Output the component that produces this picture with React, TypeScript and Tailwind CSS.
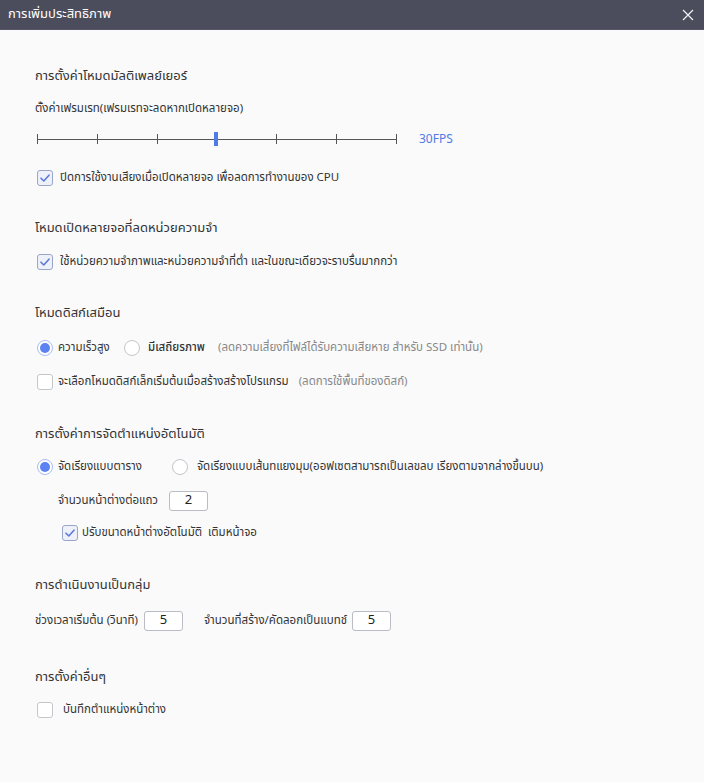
import React from 'react';

const font = { fontFamily: '"Noto Sans Thai", Tahoma, "Noto Sans", "DejaVu Sans", sans-serif' };

function Check({ checked }: { checked: boolean }) {
    return (
        <span
            className={`flex h-[16px] w-[16px] shrink-0 items-center justify-center rounded-[3px] border ${
                checked ? 'border-[#9aa6c8] bg-[#eef1fa]' : 'border-[#c4c6cc] bg-white'
            }`}
        >
            {checked ? (
                <svg width="10" height="8" viewBox="0 0 10 8" fill="none">
                    <path d="M1 4.2 3.8 7 9 1.2" stroke="#5b7bd5" strokeWidth="1.6" strokeLinecap="round" strokeLinejoin="round" />
                </svg>
            ) : null}
        </span>
    );
}

function Radio({ checked }: { checked: boolean }) {
    return (
        <span
            className={`flex h-[16px] w-[16px] shrink-0 items-center justify-center rounded-full border ${
                checked ? 'border-[#a9bdf5] bg-white' : 'border-[#c4c6cc] bg-white'
            }`}
        >
            {checked ? <span className="h-[10px] w-[10px] rounded-full bg-[#5b82f0]" /> : null}
        </span>
    );
}

function NumBox({ value }: { value: string }) {
    return (
        <span className="flex h-[20px] w-[39px] shrink-0 items-center justify-center rounded-[3px] border border-[#b9bcc4] bg-white text-[13px] text-[#222]">
            {value}
        </span>
    );
}

function Title({ children, className = '' }: { children: React.ReactNode; className?: string }) {
    return <div className={`h-[20px] text-[13px] leading-[20px] text-[#333] ${className}`}>{children}</div>;
}

function Row({ children, className = '' }: { children: React.ReactNode; className?: string }) {
    return <div className={`flex h-[20px] items-center whitespace-nowrap text-[11.5px] text-[#333] ${className}`}>{children}</div>;
}

export default function App() {
    const ticks = [0, 1, 2, 3, 4, 5, 6];
    return (
        <div className="flex h-[782px] w-[704px] flex-col bg-[#fafafb]" style={font}>
            <div className="flex h-[30px] shrink-0 items-center justify-between border-b border-[#555767] bg-[#4b4d5c] pl-[8px] pr-[10px]">
                <span className="text-[13px] text-white">การเพิ่มประสิทธิภาพ</span>
                <svg width="12" height="12" viewBox="0 0 12 12">
                    <path d="M1 1 11 11M11 1 1 11" stroke="#f2f2f4" strokeWidth="1.2" />
                </svg>
            </div>

            <div className="flex flex-col px-[35px] pt-[36px]">
                <Title>การตั้งค่าโหมดมัลติเพลย์เยอร์</Title>
                <Row className="mt-[13px]">ตั้งค่าเฟรมเรท(เฟรมเรทจะลดหากเปิดหลายจอ)</Row>

                <div className="mt-[12px] flex h-[16px] items-center">
                    <div className="relative ml-[2px] h-[16px] w-[360px]">
                        <div className="absolute left-0 right-0 top-[7.5px] h-px bg-[#555]" />
                        {ticks.map((t) => (
                            <div
                                key={t}
                                className="absolute top-[3px] h-[10px] w-px bg-[#555]"
                                style={{ left: `${t * 59.8}px` }}
                            />
                        ))}
                        <div className="absolute left-[177px] top-[1px] h-[14px] w-[4px] bg-[#4f7be6]" />
                    </div>
                    <span className="ml-[22px] text-[12px] text-[#4f7be6]">30FPS</span>
                </div>

                <Row className="mt-[21px]">
                    <span className="ml-[2px]"><Check checked /></span>
                    <span className="ml-[7px]">ปิดการใช้งานเสียงเมื่อเปิดหลายจอ เพื่อลดการทำงานของ CPU</span>
                </Row>

                <Title className="mt-[30px]">โหมดเปิดหลายจอที่ลดหน่วยความจำ</Title>
                <Row className="mt-[14px]">
                    <span className="ml-[2px]"><Check checked /></span>
                    <span className="ml-[7px]">ใช้หน่วยความจำภาพและหน่วยความจำที่ต่ำ และในขณะเดียวจะราบรื่นมากกว่า</span>
                </Row>

                <Title className="mt-[31px]">โหมดดิสก์เสมือน</Title>
                <Row className="mt-[15px]">
                    <span className="ml-[2px]"><Radio checked /></span>
                    <span className="ml-[5px] w-[66px] shrink-0">ความเร็วสูง</span>
                    <Radio checked={false} />
                    <span className="ml-[8px] w-[70px] shrink-0 font-medium">มีเสถียรภาพ</span>
                    <span className="text-[#888]">(ลดความเสี่ยงที่ไฟล์ได้รับความเสียหาย สำหรับ SSD เท่านั้น)</span>
                </Row>
                <Row className="mt-[14px]">
                    <span className="ml-[2px]"><Check checked={false} /></span>
                    <span className="ml-[5px]">จะเลือกโหมดดิสก์เล็กเริ่มต้นเมื่อสร้างสร้างโปรแกรม</span>
                    <span className="ml-[10px] text-[#888]">(ลดการใช้พื้นที่ของดิสก์)</span>
                </Row>

                <Title className="mt-[32px]">การตั้งค่าการจัดตำแหน่งอัตโนมัติ</Title>
                <Row className="mt-[13px]">
                    <span className="ml-[2px]"><Radio checked /></span>
                    <span className="ml-[5px] w-[114px] shrink-0">จัดเรียงแบบตาราง</span>
                    <Radio checked={false} />
                    <span className="ml-[9px]">จัดเรียงแบบเส้นทแยงมุม(ออฟเซตสามารถเป็นเลขลบ เรียงตามจากล่างขึ้นบน)</span>
                </Row>
                <Row className="mt-[14px] pl-[23px]">
                    <span className="w-[111px] shrink-0">จำนวนหน้าต่างต่อแถว</span>
                    <NumBox value="2" />
                </Row>
                <Row className="mt-[12px] pl-[27px]">
                    <Check checked />
                    <span className="ml-[4px]">ปรับขนาดหน้าต่างอัตโนมัติ&nbsp;&nbsp;เติมหน้าจอ</span>
                </Row>

                <Title className="mt-[32px]">การดำเนินงานเป็นกลุ่ม</Title>
                <Row className="mt-[16px]">
                    <span className="w-[109px] shrink-0">ช่วงเวลาเริ่มต้น (วินาที)</span>
                    <NumBox value="5" />
                    <span className="ml-[21px] w-[148px] shrink-0">จำนวนที่สร้าง/คัดลอกเป็นแบทช์</span>
                    <NumBox value="5" />
                </Row>

                <Title className="mt-[36px]">การตั้งค่าอื่นๆ</Title>
                <Row className="mt-[13px]">
                    <span className="ml-[2px]"><Check checked={false} /></span>
                    <span className="ml-[10px]">บันทึกตำแหน่งหน้าต่าง</span>
                </Row>
            </div>
        </div>
    );
}
